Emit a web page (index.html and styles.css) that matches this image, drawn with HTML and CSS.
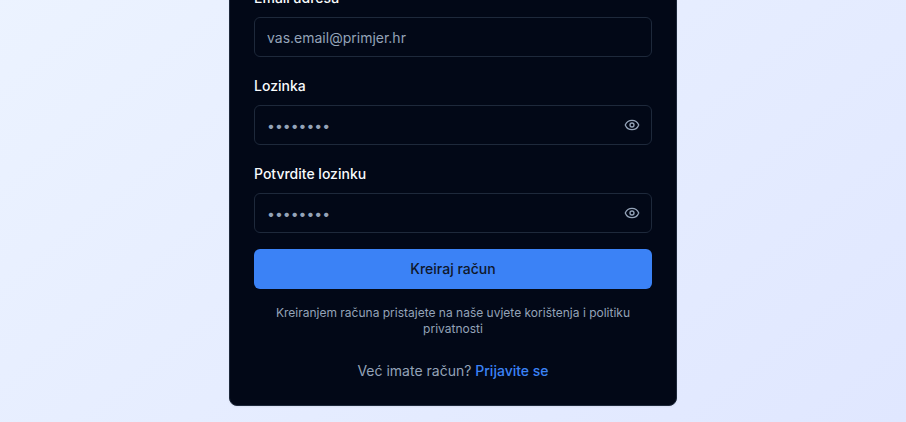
FILE: index.html
```html
<!DOCTYPE html>
<html lang="hr">
<head>
<meta charset="utf-8">
<title>Kreiraj račun</title>
<link rel="stylesheet" href="styles.css">
</head>
<body>
<main class="page">
<section class="card">
<form class="form">
<div class="field">
<label for="email">Email adresa</label>
<input id="email" type="email" placeholder="vas.email@primjer.hr">
</div>
<div class="field">
<label for="password">Lozinka</label>
<div class="password">
<input id="password" type="password" placeholder="••••••••">
<button class="toggle" type="button"><svg viewBox="0 0 24 24"><path d="M2.062 12.348a1 1 0 0 1 0-.696 10.75 10.75 0 0 1 19.876 0 1 1 0 0 1 0 .696 10.75 10.75 0 0 1-19.876 0"/><circle cx="12" cy="12" r="3"/></svg></button>
</div>
</div>
<div class="field">
<label for="confirm">Potvrdite lozinku</label>
<div class="password">
<input id="confirm" type="password" placeholder="••••••••">
<button class="toggle" type="button"><svg viewBox="0 0 24 24"><path d="M2.062 12.348a1 1 0 0 1 0-.696 10.75 10.75 0 0 1 19.876 0 1 1 0 0 1 0 .696 10.75 10.75 0 0 1-19.876 0"/><circle cx="12" cy="12" r="3"/></svg></button>
</div>
</div>
<button class="submit" type="button">Kreiraj račun</button>
</form>
<p class="terms">Kreiranjem računa pristajete na naše uvjete korištenja i politiku privatnosti</p>
<p class="login">Već imate račun? <a href="#">Prijavite se</a></p>
</section>
</main>
</body>
</html>
```
FILE: styles.css
```css
* { box-sizing: border-box; }
body { margin: 0; font-family: Inter, sans-serif; font-size: 14px; line-height: 20px; }
.page {
  height: 422px;
  padding-bottom: 16px;
  overflow: hidden;
  display: flex;
  flex-direction: column;
  align-items: center;
  justify-content: flex-end;
  background: linear-gradient(to bottom right, #eff6ff, #e0e7ff) bottom / 100% 740px no-repeat;
}
.card {
  flex: none;
  width: 448px;
  padding: 24px;
  background: #020817;
  border: 1px solid #1e293b;
  border-radius: 8px;
  box-shadow: 0 1px 2px rgba(0, 0, 0, 0.05);
  color: #f8fafc;
}
.form { display: flex; flex-direction: column; gap: 16px; }
.field { display: flex; flex-direction: column; gap: 7px; }
.field label { padding-top: 1px; font-weight: 500; line-height: 24px; }
input {
  display: block;
  width: 100%;
  height: 40px;
  padding: 8px 12px;
  border: 1px solid #1e293b;
  border-radius: 6px;
  background: #020817;
  color: #f8fafc;
  font: 14px/20px Inter, sans-serif;
}
input::placeholder { color: #94a3b8; opacity: 1; }
.password { position: relative; }
.toggle {
  position: absolute;
  top: 0;
  right: 0;
  height: 40px;
  padding: 0 12px;
  border: 0;
  background: none;
  color: #94a3b8;
  display: flex;
  align-items: center;
}
.toggle svg { width: 16px; height: 16px; fill: none; stroke: currentColor; stroke-width: 2; stroke-linecap: round; stroke-linejoin: round; }
.submit {
  height: 40px;
  border: 0;
  border-radius: 6px;
  background: #3b82f6;
  color: #0f172a;
  font: 500 14px/20px Inter, sans-serif;
}
.terms { margin: 16px 0 0; font-size: 12px; line-height: 16px; text-align: center; color: #94a3b8; }
.login { margin: 24px 0 0; text-align: center; color: #94a3b8; }
.login a { color: #3b82f6; font-weight: 500; text-decoration: none; }
```
